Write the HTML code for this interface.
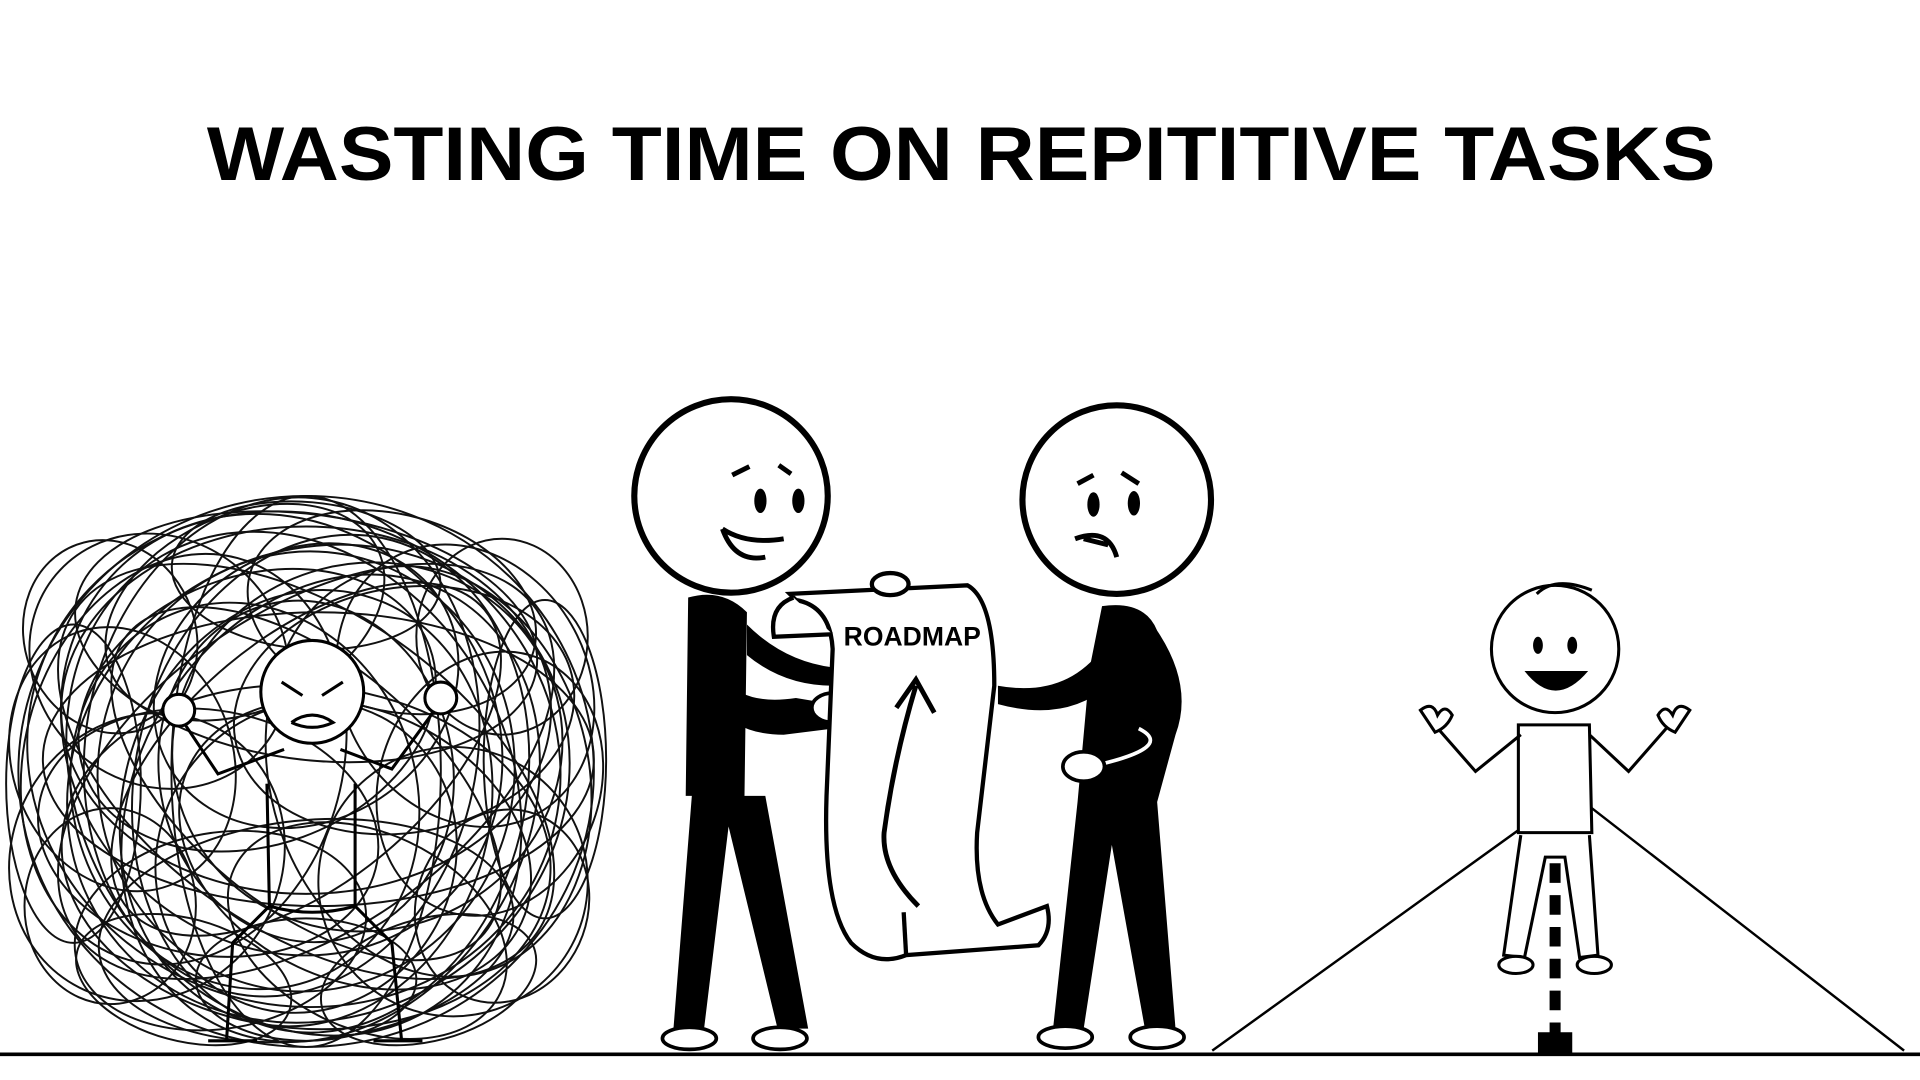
<!DOCTYPE html>
<html><head><meta charset="utf-8"><style>
html,body{margin:0;padding:0;background:#fff;width:1920px;height:1080px;overflow:hidden}
svg{display:block}
</style></head><body>
<svg width="1920" height="1080" viewBox="0 0 1568 882" preserveAspectRatio="none" xmlns="http://www.w3.org/2000/svg">
<rect width="1568" height="882" fill="#fff"/>
<text x="785" y="147" text-anchor="middle" font-family="Liberation Sans, sans-serif" font-weight="bold" font-size="62" textLength="1232" lengthAdjust="spacingAndGlyphs" fill="#000">WASTING TIME ON REPITITIVE TASKS</text>
<line x1="0" y1="861" x2="1568" y2="861" stroke="#000" stroke-width="3"/>

<!-- scribble ball -->
<g fill="none" stroke="#111" stroke-width="1.6">
<ellipse cx="250" cy="630" rx="235" ry="225"/>
<ellipse cx="240" cy="620" rx="220" ry="200" transform="rotate(20 240 620)"/>
<ellipse cx="260" cy="640" rx="210" ry="190" transform="rotate(-30 260 640)"/>
<ellipse cx="230" cy="600" rx="190" ry="170" transform="rotate(45 230 600)"/>
<ellipse cx="270" cy="660" rx="200" ry="160" transform="rotate(-60 270 660)"/>
<ellipse cx="250" cy="630" rx="170" ry="180" transform="rotate(10 250 630)"/>
<ellipse cx="200" cy="650" rx="160" ry="140" transform="rotate(70 200 650)"/>
<ellipse cx="300" cy="610" rx="160" ry="150" transform="rotate(-15 300 610)"/>
<ellipse cx="250" cy="580" rx="200" ry="150"/>
<ellipse cx="250" cy="700" rx="200" ry="140" transform="rotate(5 250 700)"/>
<ellipse cx="150" cy="620" rx="130" ry="170" transform="rotate(15 150 620)"/>
<ellipse cx="350" cy="630" rx="130" ry="170" transform="rotate(-15 350 630)"/>
<ellipse cx="250" cy="520" rx="190" ry="100" transform="rotate(8 250 520)"/>
<ellipse cx="250" cy="760" rx="170" ry="90" transform="rotate(-6 250 760)"/>
<ellipse cx="120" cy="700" rx="110" ry="120" transform="rotate(30 120 700)"/>
<ellipse cx="380" cy="560" rx="100" ry="120" transform="rotate(-30 380 560)"/>
<ellipse cx="130" cy="540" rx="110" ry="100" transform="rotate(40 130 540)"/>
<ellipse cx="370" cy="720" rx="110" ry="110" transform="rotate(-40 370 720)"/>
<ellipse cx="250" cy="630" rx="140" ry="120" transform="rotate(80 250 630)"/>
<ellipse cx="250" cy="630" rx="230" ry="130" transform="rotate(35 250 630)"/>
<ellipse cx="250" cy="630" rx="230" ry="130" transform="rotate(-35 250 630)"/>
<ellipse cx="250" cy="630" rx="225" ry="110" transform="rotate(90 250 630)"/>
<ellipse cx="260" cy="620" rx="225" ry="120"/>
<ellipse cx="240" cy="640" rx="215" ry="175" transform="rotate(60 240 640)"/>
<ellipse cx="210" cy="580" rx="150" ry="110" transform="rotate(-20 210 580)"/>
<ellipse cx="290" cy="690" rx="150" ry="110" transform="rotate(25 290 690)"/>
<ellipse cx="180" cy="760" rx="120" ry="80" transform="rotate(-10 180 760)"/>
<ellipse cx="320" cy="500" rx="120" ry="80" transform="rotate(15 320 500)"/>
<ellipse cx="60" cy="640" rx="55" ry="130"/>
<ellipse cx="445" cy="620" rx="50" ry="130"/>
<ellipse cx="100" cy="620" rx="90" ry="110" transform="rotate(-20 100 620)"/>
<ellipse cx="400" cy="640" rx="90" ry="110" transform="rotate(20 400 640)"/>
<ellipse cx="200" cy="500" rx="120" ry="80" transform="rotate(-25 200 500)"/>
<ellipse cx="300" cy="760" rx="120" ry="80" transform="rotate(25 300 760)"/>
<ellipse cx="250" cy="640" rx="100" ry="190" transform="rotate(-50 250 640)"/>
<ellipse cx="250" cy="620" rx="100" ry="190" transform="rotate(50 250 620)"/>
<ellipse cx="170" cy="680" rx="140" ry="100" transform="rotate(10 170 680)"/>
<ellipse cx="330" cy="580" rx="140" ry="100" transform="rotate(-10 330 580)"/>
<ellipse cx="250" cy="800" rx="90" ry="50"/>
<ellipse cx="250" cy="470" rx="110" ry="60" transform="rotate(5 250 470)"/>
<ellipse cx="90" cy="740" rx="70" ry="80"/>
<ellipse cx="410" cy="520" rx="70" ry="80"/>
<ellipse cx="410" cy="740" rx="70" ry="80" transform="rotate(20 410 740)"/>
<ellipse cx="90" cy="520" rx="70" ry="80" transform="rotate(-20 90 520)"/>
<ellipse cx="250" cy="660" rx="180" ry="150" transform="rotate(-75 250 660)"/>
<ellipse cx="230" cy="610" rx="205" ry="160" transform="rotate(100 230 610)"/>
<ellipse cx="270" cy="640" rx="160" ry="205" transform="rotate(12 270 640)"/>
<ellipse cx="250" cy="700" rx="120" ry="130" transform="rotate(33 250 700)"/>
<ellipse cx="250" cy="560" rx="130" ry="110" transform="rotate(-33 250 560)"/>
<ellipse cx="150" cy="800" rx="90" ry="50" transform="rotate(15 150 800)"/>
<ellipse cx="350" cy="800" rx="90" ry="50" transform="rotate(-15 350 800)"/>
</g>
<!-- angry person -->
<g fill="none" stroke="#000" stroke-width="2.5">
<circle cx="255" cy="565" r="42" fill="#fff"/>
<path d="M232 612 L178 632 L150 590 M278 612 L320 628 L355 580"/>
<path d="M218 640 L220 740 L190 770 L185 850 M290 640 L290 740 L320 770 L328 850 M220 740 Q255 750 290 740"/>
<circle cx="146" cy="580" r="13" fill="#fff"/><circle cx="360" cy="570" r="13" fill="#fff"/>
<path d="M230 557 L247 568 M280 557 L263 568 M238 590 Q255 578 272 590 Q255 598 238 590"/>
<path d="M170 850 L210 850 M305 850 L345 850"/>
</g>

<!-- left man -->
<g stroke="#000" stroke-width="5" fill="#fff">
<circle cx="597" cy="405" r="79"/>
</g>
<g fill="#000">
<ellipse cx="621" cy="409" rx="5" ry="10"/><ellipse cx="652" cy="409" rx="5" ry="10"/>
<path d="M562 488 Q590 480 610 500 L608 650 L625 650 L660 840 L635 840 L595 675 L575 840 L550 840 L565 650 L560 650 Z"/>
<path d="M610 510 Q640 540 680 545 L680 560 Q640 560 610 535 Z"/>
<path d="M580 520 Q585 580 650 570 L680 575 L680 595 L640 600 Q570 600 575 520 Z"/>
</g>
<path d="M590 432 Q610 445 640 440 M590 432 Q600 460 625 455 M598 388 L612 381 M636 380 L646 387" stroke="#000" stroke-width="4" fill="none"/>
<g fill="#fff" stroke="#000" stroke-width="3">
<ellipse cx="680" cy="578" rx="17" ry="12"/>
<ellipse cx="563" cy="848" rx="22" ry="9"/><ellipse cx="637" cy="848" rx="22" ry="9"/>
</g>

<!-- right man -->
<g stroke="#000" stroke-width="5" fill="#fff"><circle cx="912" cy="408" r="77"/></g>
<g fill="#000">
<ellipse cx="893" cy="412" rx="5" ry="10"/><ellipse cx="926" cy="411" rx="5" ry="10"/>
<path d="M900 495 Q935 490 945 515 Q975 560 960 600 L945 655 L960 840 L935 840 L908 690 L885 840 L860 840 L880 655 L890 545 Z"/>
<path d="M900 530 Q870 570 815 560 L815 575 Q870 590 905 560 Z"/>
</g>
<path d="M878 440 Q905 430 912 455 M885 440 L905 445 M880 395 L893 388 M916 386 L930 395" stroke="#000" stroke-width="4" fill="none"/>
<path d="M930 595 Q960 610 895 625" stroke="#fff" stroke-width="3" fill="none"/>
<g fill="#fff" stroke="#000" stroke-width="3">
<ellipse cx="885" cy="626" rx="17" ry="12"/>
<ellipse cx="870" cy="847" rx="22" ry="9"/><ellipse cx="945" cy="847" rx="22" ry="9"/>
</g>

<!-- scroll -->
<g fill="#fff" stroke="#000" stroke-width="3.5">
<path d="M645 485 L790 478 Q812 490 812 560 L798 680 Q795 730 815 755 L855 740 Q860 760 848 772 L740 780 Q715 790 695 770 Q672 740 675 650 L680 530 Q678 495 650 490 Z"/>
<path d="M648 488 Q628 495 632 520 L680 518"/>
<ellipse cx="727" cy="477" rx="15" ry="9"/>
<path d="M738 745 L740 780" fill="none"/>
</g>
<text x="745" y="527" text-anchor="middle" font-family="Liberation Sans, sans-serif" font-weight="bold" font-size="22" textLength="112" lengthAdjust="spacingAndGlyphs" fill="#000">ROADMAP</text>
<path d="M750 740 Q720 710 722 680 Q730 620 748 560 M732 578 L748 555 L763 582" stroke="#000" stroke-width="4" fill="none"/>

<!-- road -->
<path d="M990 858 L1265 660 M1300 660 L1555 858" stroke="#000" stroke-width="2" fill="none"/>
<path d="M1270 705 L1270 860" stroke="#000" stroke-width="9" stroke-dasharray="16 10" fill="none"/>
<rect x="1256" y="843" width="28" height="18" fill="#000"/>
<!-- happy person -->
<g fill="#fff" stroke="#000" stroke-width="2.5">
<path d="M1240 592 L1298 592 L1300 680 L1240 680 Z"/>
<path d="M1242 682 L1228 780 L1245 782 L1262 700 L1278 700 L1290 782 L1305 780 L1298 682"/>
<path d="M1242 600 L1205 630 L1170 590 M1298 600 L1330 630 L1365 590" fill="none"/>
<circle cx="1270" cy="530" r="52"/>
<path d="M1160 580 q10 -8 14 4 q6 -10 12 0 q-4 10 -14 14 Z M1380 580 q-10 -8 -14 4 q-6 -10 -12 0 q4 10 14 14 Z"/>
<path d="M1255 485 Q1270 470 1300 482" fill="none"/>
<ellipse cx="1238" cy="788" rx="14" ry="7"/><ellipse cx="1302" cy="788" rx="14" ry="7"/>
</g>
<path d="M1245 548 Q1270 580 1297 548 Z" fill="#000"/>
<ellipse cx="1256" cy="527" rx="4" ry="7" fill="#000"/><ellipse cx="1284" cy="527" rx="4" ry="7" fill="#000"/>
</svg>
</body></html>
